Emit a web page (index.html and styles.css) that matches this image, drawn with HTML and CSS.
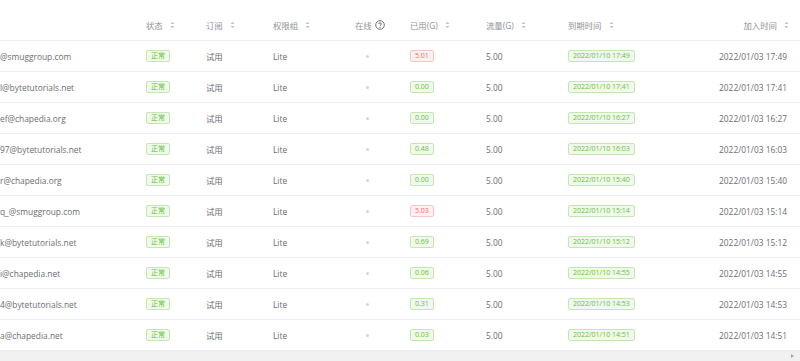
FILE: index.html
```html
<!DOCTYPE html>
<html lang="zh-CN">
<head>
<meta charset="utf-8">
<title>用户列表</title>
<link rel="stylesheet" href="styles.css">
</head>
<body>
<div class="table">
  <div class="row head">
    <div class="cell"></div>
    <div class="cell">状态<span class="sort"><svg viewBox="0 0 5 8" width="5" height="8"><polygon points="0.5,3 2.5,0.8 4.5,3"/><polygon points="0.5,5 2.5,7.2 4.5,5"/></svg></span></div>
    <div class="cell">订阅<span class="sort"><svg viewBox="0 0 5 8" width="5" height="8"><polygon points="0.5,3 2.5,0.8 4.5,3"/><polygon points="0.5,5 2.5,7.2 4.5,5"/></svg></span></div>
    <div class="cell">权限组<span class="sort"><svg viewBox="0 0 5 8" width="5" height="8"><polygon points="0.5,3 2.5,0.8 4.5,3"/><polygon points="0.5,5 2.5,7.2 4.5,5"/></svg></span></div>
    <div class="cell">在线<span class="help"><svg viewBox="0 0 10 10" width="10" height="10"><circle cx="5" cy="5" r="4.3" fill="none" stroke="#606266" stroke-width="0.9"/><path d="M3.6 4 C3.6 2.4 6.4 2.4 6.4 4 C6.4 5 5 5 5 6.1" fill="none" stroke="#606266" stroke-width="0.9"/><circle cx="5" cy="7.4" r="0.55" fill="#606266"/></svg></span></div>
    <div class="cell">已用(G)<span class="sort"><svg viewBox="0 0 5 8" width="5" height="8"><polygon points="0.5,3 2.5,0.8 4.5,3"/><polygon points="0.5,5 2.5,7.2 4.5,5"/></svg></span></div>
    <div class="cell">流量(G)<span class="sort"><svg viewBox="0 0 5 8" width="5" height="8"><polygon points="0.5,3 2.5,0.8 4.5,3"/><polygon points="0.5,5 2.5,7.2 4.5,5"/></svg></span></div>
    <div class="cell">到期时间<span class="sort"><svg viewBox="0 0 5 8" width="5" height="8"><polygon points="0.5,3 2.5,0.8 4.5,3"/><polygon points="0.5,5 2.5,7.2 4.5,5"/></svg></span></div>
    <div class="cell right">加入时间<span class="sort"><svg viewBox="0 0 5 8" width="5" height="8"><polygon points="0.5,3 2.5,0.8 4.5,3"/><polygon points="0.5,5 2.5,7.2 4.5,5"/></svg></span></div>
  </div>

  <div class="row">
    <div class="cell email">@smuggroup.com</div>
    <div class="cell"><span class="tag ok">正常</span></div>
    <div class="cell">试用</div>
    <div class="cell">Lite</div>
    <div class="cell"><span class="dot"></span></div>
    <div class="cell"><span class="tag bad">5.01</span></div>
    <div class="cell">5.00</div>
    <div class="cell"><span class="tag ok">2022/01/10 17:49</span></div>
    <div class="cell right">2022/01/03 17:49</div>
  </div>
  <div class="row">
    <div class="cell email">l@bytetutorials.net</div>
    <div class="cell"><span class="tag ok">正常</span></div>
    <div class="cell">试用</div>
    <div class="cell">Lite</div>
    <div class="cell"><span class="dot"></span></div>
    <div class="cell"><span class="tag ok">0.00</span></div>
    <div class="cell">5.00</div>
    <div class="cell"><span class="tag ok">2022/01/10 17:41</span></div>
    <div class="cell right">2022/01/03 17:41</div>
  </div>
  <div class="row">
    <div class="cell email">ef@chapedia.org</div>
    <div class="cell"><span class="tag ok">正常</span></div>
    <div class="cell">试用</div>
    <div class="cell">Lite</div>
    <div class="cell"><span class="dot"></span></div>
    <div class="cell"><span class="tag ok">0.00</span></div>
    <div class="cell">5.00</div>
    <div class="cell"><span class="tag ok">2022/01/10 16:27</span></div>
    <div class="cell right">2022/01/03 16:27</div>
  </div>
  <div class="row">
    <div class="cell email">97@bytetutorials.net</div>
    <div class="cell"><span class="tag ok">正常</span></div>
    <div class="cell">试用</div>
    <div class="cell">Lite</div>
    <div class="cell"><span class="dot"></span></div>
    <div class="cell"><span class="tag ok">0.48</span></div>
    <div class="cell">5.00</div>
    <div class="cell"><span class="tag ok">2022/01/10 16:03</span></div>
    <div class="cell right">2022/01/03 16:03</div>
  </div>
  <div class="row">
    <div class="cell email">r@chapedia.org</div>
    <div class="cell"><span class="tag ok">正常</span></div>
    <div class="cell">试用</div>
    <div class="cell">Lite</div>
    <div class="cell"><span class="dot"></span></div>
    <div class="cell"><span class="tag ok">0.00</span></div>
    <div class="cell">5.00</div>
    <div class="cell"><span class="tag ok">2022/01/10 15:40</span></div>
    <div class="cell right">2022/01/03 15:40</div>
  </div>
  <div class="row">
    <div class="cell email">q_@smuggroup.com</div>
    <div class="cell"><span class="tag ok">正常</span></div>
    <div class="cell">试用</div>
    <div class="cell">Lite</div>
    <div class="cell"><span class="dot"></span></div>
    <div class="cell"><span class="tag bad">5.03</span></div>
    <div class="cell">5.00</div>
    <div class="cell"><span class="tag ok">2022/01/10 15:14</span></div>
    <div class="cell right">2022/01/03 15:14</div>
  </div>
  <div class="row">
    <div class="cell email">k@bytetutorials.net</div>
    <div class="cell"><span class="tag ok">正常</span></div>
    <div class="cell">试用</div>
    <div class="cell">Lite</div>
    <div class="cell"><span class="dot"></span></div>
    <div class="cell"><span class="tag ok">0.69</span></div>
    <div class="cell">5.00</div>
    <div class="cell"><span class="tag ok">2022/01/10 15:12</span></div>
    <div class="cell right">2022/01/03 15:12</div>
  </div>
  <div class="row">
    <div class="cell email">i@chapedia.net</div>
    <div class="cell"><span class="tag ok">正常</span></div>
    <div class="cell">试用</div>
    <div class="cell">Lite</div>
    <div class="cell"><span class="dot"></span></div>
    <div class="cell"><span class="tag ok">0.06</span></div>
    <div class="cell">5.00</div>
    <div class="cell"><span class="tag ok">2022/01/10 14:55</span></div>
    <div class="cell right">2022/01/03 14:55</div>
  </div>
  <div class="row">
    <div class="cell email">4@bytetutorials.net</div>
    <div class="cell"><span class="tag ok">正常</span></div>
    <div class="cell">试用</div>
    <div class="cell">Lite</div>
    <div class="cell"><span class="dot"></span></div>
    <div class="cell"><span class="tag ok">0.31</span></div>
    <div class="cell">5.00</div>
    <div class="cell"><span class="tag ok">2022/01/10 14:53</span></div>
    <div class="cell right">2022/01/03 14:53</div>
  </div>
  <div class="row">
    <div class="cell email">a@chapedia.net</div>
    <div class="cell"><span class="tag ok">正常</span></div>
    <div class="cell">试用</div>
    <div class="cell">Lite</div>
    <div class="cell"><span class="dot"></span></div>
    <div class="cell"><span class="tag ok">0.03</span></div>
    <div class="cell">5.00</div>
    <div class="cell"><span class="tag ok">2022/01/10 14:51</span></div>
    <div class="cell right">2022/01/03 14:51</div>
  </div>
</div>
<div class="hscroll"><span class="arrow"></span></div>
</body>
</html>
```

FILE: styles.css
```css
html, body {
  margin: 0;
  padding: 0;
  background: #fff;
}
body {
  width: 800px;
  height: 361px;
  overflow: hidden;
  font-family: "Open Sans", "Noto Sans CJK SC", sans-serif;
  font-size: 8.4px;
  color: #6b6e73;
}
.table {
  display: flex;
  flex-direction: column;
}
.row {
  display: grid;
  grid-template-columns: 146px 60px 67px 82px 55px 76px 82px 100px 1fr;
  height: 30px;
  border-bottom: 1px solid #ebeef5;
  align-items: center;
}
.row.head {
  height: 40px;
  padding-top: 10px;
  box-sizing: border-box;
  height: 41px;
  color: #909399;
}
.cell {
  display: flex;
  align-items: center;
  white-space: nowrap;
  overflow: hidden;
}
.cell.right {
  justify-content: flex-end;
  padding-right: 13px;
}
.head .cell.right {
  padding-right: 11px;
}
.sort {
  display: inline-flex;
  margin-left: 7px;
  fill: #c0c4cc;
}
.help {
  display: inline-flex;
  margin-left: 3px;
}
.dot {
  display: inline-block;
  margin-left: 11px;
  width: 3px;
  height: 3px;
  border-radius: 50%;
  background: #d4d6da;
}
.tag {
  display: inline-flex;
  align-items: center;
  height: 10px;
  padding: 0 4px;
  border: 1px solid;
  border-radius: 2px;
  font-size: 7px;
  line-height: 10px;
}
.tag.ok {
  background: #f0f9eb;
  border-color: #c2e7b0;
  color: #67c23a;
}
.tag.bad {
  background: #fef0f0;
  border-color: #fbc4c4;
  color: #f56c6c;
}
.hscroll {
  height: 10px;
  background: #f1f1f1;
  display: flex;
  align-items: center;
  justify-content: flex-end;
  padding-right: 6px;
}
.arrow {
  width: 0;
  height: 0;
  border-top: 2px solid transparent;
  border-bottom: 2px solid transparent;
  border-left: 3px solid #a3a3a3;
}
```
